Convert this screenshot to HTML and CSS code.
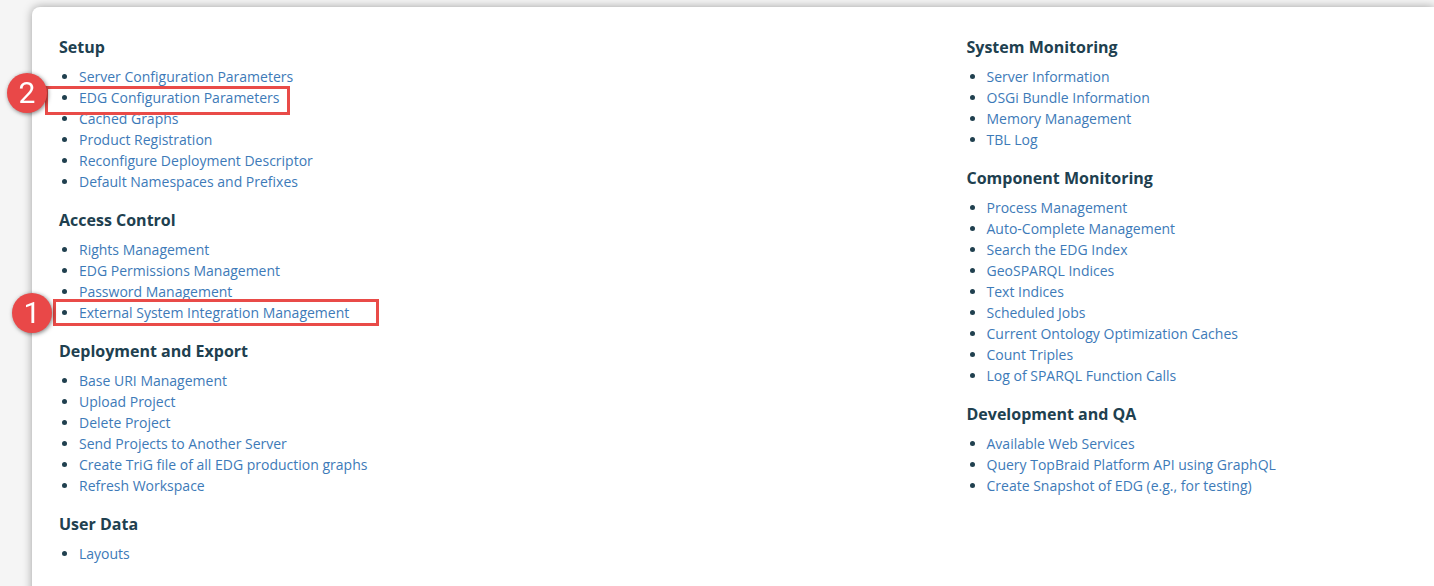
FILE: index.html
```html
<!DOCTYPE html>
<html lang="en">
<head>
<meta charset="utf-8">
<title>Server Administration</title>
<link rel="stylesheet" href="styles.css">
</head>
<body>
<main class="panel">
  <div class="column">
    <section class="group">
      <h2 class="heading">Setup</h2>
      <ul class="links">
        <li><a href="#">Server Configuration Parameters</a></li>
        <li class="marked"><a href="#">EDG Configuration Parameters</a>
          <span class="outline outline-edg"></span>
          <svg class="badge badge-edg" viewBox="0 0 46 46"><circle cx="22" cy="22" r="20"/><text x="22" y="32">2</text></svg>
        </li>
        <li><a href="#">Cached Graphs</a></li>
        <li><a href="#">Product Registration</a></li>
        <li><a href="#">Reconfigure Deployment Descriptor</a></li>
        <li><a href="#">Default Namespaces and Prefixes</a></li>
      </ul>
    </section>
    <section class="group">
      <h2 class="heading">Access Control</h2>
      <ul class="links">
        <li><a href="#">Rights Management</a></li>
        <li><a href="#">EDG Permissions Management</a></li>
        <li><a href="#">Password Management</a></li>
        <li class="marked"><a href="#">External System Integration Management</a>
          <span class="outline outline-external"></span>
          <svg class="badge badge-external" viewBox="0 0 46 46"><circle cx="22" cy="22" r="20"/><text x="22" y="32">1</text></svg>
        </li>
      </ul>
    </section>
    <section class="group">
      <h2 class="heading">Deployment and Export</h2>
      <ul class="links">
        <li><a href="#">Base URI Management</a></li>
        <li><a href="#">Upload Project</a></li>
        <li><a href="#">Delete Project</a></li>
        <li><a href="#">Send Projects to Another Server</a></li>
        <li><a href="#">Create TriG file of all EDG production graphs</a></li>
        <li><a href="#">Refresh Workspace</a></li>
      </ul>
    </section>
    <section class="group">
      <h2 class="heading">User Data</h2>
      <ul class="links">
        <li><a href="#">Layouts</a></li>
      </ul>
    </section>
  </div>
  <div class="column">
    <section class="group">
      <h2 class="heading">System Monitoring</h2>
      <ul class="links">
        <li><a href="#">Server Information</a></li>
        <li><a href="#">OSGi Bundle Information</a></li>
        <li><a href="#">Memory Management</a></li>
        <li><a href="#">TBL Log</a></li>
      </ul>
    </section>
    <section class="group">
      <h2 class="heading">Component Monitoring</h2>
      <ul class="links">
        <li><a href="#">Process Management</a></li>
        <li><a href="#">Auto-Complete Management</a></li>
        <li><a href="#">Search the EDG Index</a></li>
        <li><a href="#">GeoSPARQL Indices</a></li>
        <li><a href="#">Text Indices</a></li>
        <li><a href="#">Scheduled Jobs</a></li>
        <li><a href="#">Current Ontology Optimization Caches</a></li>
        <li><a href="#">Count Triples</a></li>
        <li><a href="#">Log of SPARQL Function Calls</a></li>
      </ul>
    </section>
    <section class="group">
      <h2 class="heading">Development and QA</h2>
      <ul class="links">
        <li><a href="#">Available Web Services</a></li>
        <li><a href="#">Query TopBraid Platform API using GraphQL</a></li>
        <li><a href="#">Create Snapshot of EDG (e.g., for testing)</a></li>
      </ul>
    </section>
  </div>
</main>
</body>
</html>
```
FILE: styles.css
```css
* {
  box-sizing: border-box;
}

body {
  margin: 0;
  padding: 7px 0 0 32px;
  min-height: 100vh;
  display: flex;
  overflow-x: hidden;
  background: #f5f5f5;
  color: #20404f;
  font: 14px/21px "Open Sans", sans-serif;
}

.panel {
  flex: 1;
  display: grid;
  grid-template-columns: 66% 1fr;
  align-items: start;
  padding: 28px 0 20px 27px;
  background: #fff;
  border-radius: 8px 0 0 0;
  box-shadow: 0 0 10px rgba(0, 0, 0, 0.35);
}

.group {
  margin-bottom: 16px;
}

.heading {
  margin: 0 0 7px;
  font-size: 16px;
  line-height: 24px;
  font-weight: 700;
}

.links {
  margin: 0;
  padding-left: 20px;
}

.links a {
  color: #3d7ab8;
  text-decoration: none;
}

.marked {
  position: relative;
}

.outline {
  position: absolute;
  border: 3px solid #e94b48;
  pointer-events: none;
}

.outline-edg {
  top: -1px;
  left: -34px;
  width: 245px;
  height: 29px;
}

.outline-external {
  top: -3px;
  left: -26px;
  width: 326px;
  height: 27px;
}

.badge {
  position: absolute;
  width: 46px;
  height: 46px;
  filter: drop-shadow(1px 1px 2px rgba(0, 0, 0, 0.5));
}

.badge circle {
  fill: #e94848;
}

.badge text {
  fill: #fff;
  font: 30px Roboto, sans-serif;
  text-anchor: middle;
}

.badge-edg {
  top: -16px;
  left: -74px;
}

.badge-external {
  top: -11px;
  left: -69px;
}
```
